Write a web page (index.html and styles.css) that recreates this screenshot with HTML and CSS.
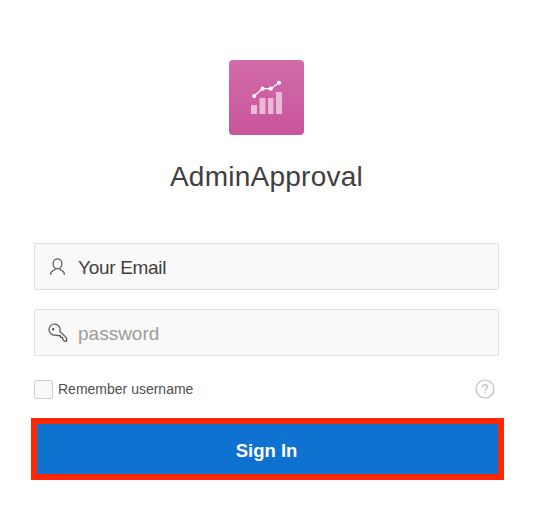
FILE: index.html
```html
<!DOCTYPE html>
<html lang="en">
<head>
<meta charset="utf-8">
<title>AdminApproval</title>
<link rel="stylesheet" href="styles.css">
</head>
<body>
<main class="login">
  <svg class="logo" viewBox="0 0 75 75" aria-hidden="true">
    <defs><linearGradient id="pink" x1="0" y1="0" x2="0" y2="1"><stop offset="0" stop-color="#d16ba9"/><stop offset="1" stop-color="#c9559b"/></linearGradient></defs>
    <rect width="75" height="75" rx="4" fill="url(#pink)"/>
    <path d="M22 45h6v9h-6zM30.500 38h6v16h-6zM39 38h5.500v16H39zM47 32h6v22h-6z" fill="#ebb9d8"/>
    <path d="M25 36l8.500-7.300H42l8-5.900" fill="none" stroke="#fff" stroke-width="1.300"/>
    <g fill="#fff"><circle cx="25.200" cy="36" r="2.100"/><circle cx="33.500" cy="28.700" r="2.100"/><circle cx="41.700" cy="28.700" r="2.100"/><circle cx="50" cy="22.800" r="2.100"/></g>
  </svg>
  <h1 class="title">AdminApproval</h1>
  <form class="form">
    <div class="field">
      <svg class="icon" viewBox="0 0 20 20" aria-hidden="true"><ellipse cx="9.500" cy="6.800" rx="4.400" ry="5"/><path d="M7.600 11.300Q7.400 12.900 5 13.800Q2.600 14.700 2.600 17.700M11.400 11.300Q11.600 12.900 14 13.800Q16.400 14.700 16.400 17.700"/></svg>
      <span class="value">Your Email</span>
    </div>
    <div class="field">
      <svg class="icon" viewBox="0 0 20 20" aria-hidden="true"><path d="M11.900 8.400A5.600 5.600 0 1 0 7.700 12.100L11 12.800l1.200-.4.500 2h1.700l.5 2.100 1.400 1.700h2.300v-3.300z"/><circle cx="5.200" cy="6.200" r=".6"/></svg>
      <span class="value value-hint">password</span>
    </div>
    <div class="options">
      <span class="checkbox"></span>
      <span class="remember">Remember username</span>
      <svg class="help" viewBox="0 0 20 20" aria-hidden="true"><circle cx="10" cy="10" r="9"/><path d="M7.500 8.200q0-2.500 2.500-2.500t2.500 2.300c0 1.600-2.400 1.700-2.400 3.700M10.100 13.100v1.400"/></svg>
    </div>
    <button class="submit" type="button">Sign In</button>
  </form>
</main>
</body>
</html>
```
FILE: styles.css
```css
body {
  margin: 0;
  background: #fff;
  font-family: "Liberation Sans", Arial, sans-serif;
  color: #404040;
}

.login {
  display: flex;
  flex-direction: column;
  align-items: center;
  padding-top: 60px;
}

.logo {
  display: block;
  width: 75px;
  height: 75px;
}

.title {
  margin: 26px 0 0;
  font-size: 28px;
  font-weight: 400;
  line-height: 32px;
  letter-spacing: 0.25px;
}

.form {
  display: flex;
  flex-direction: column;
  gap: 19px;
  width: 473px;
  margin: 50px 0 0 2px;
}

.field {
  box-sizing: border-box;
  display: flex;
  align-items: center;
  width: 465px;
  height: 47px;
  margin-left: 3px;
  padding-left: 13px;
  border: 1px solid #dfdfdf;
  border-radius: 2px;
  background: #f9f9f9;
}

.icon {
  width: 20px;
  height: 20px;
  margin-right: 10px;
  fill: none;
  stroke: #505050;
  stroke-width: 1.2;
}

.value {
  padding-top: 2px;
  font-size: 19px;
  line-height: 24px;
  letter-spacing: -0.3px;
}

.value-hint {
  color: #9c9c9c;
  letter-spacing: 0;
}

.options {
  display: flex;
  align-items: center;
  width: 461px;
  height: 20px;
  margin: 4px 0 0 3px;
}

.checkbox {
  box-sizing: border-box;
  width: 19px;
  height: 19px;
  margin-right: 5px;
  border: 1px solid #cfcfcf;
  border-radius: 2px;
  background: #f9f9f9;
}

.remember {
  font-size: 14px;
  color: #505050;
}

.help {
  width: 20px;
  height: 20px;
  margin-left: auto;
  fill: none;
  stroke: #bcbcbc;
  stroke-width: 1.2;
}

.submit {
  box-sizing: border-box;
  width: 473px;
  height: 62px;
  padding: 3px 2px 0 0;
  border: 6px solid #ff2600;
  background: #0d72d0;
  color: #fff;
  font: bold 18.5px "Liberation Sans", Arial, sans-serif;
}
```
